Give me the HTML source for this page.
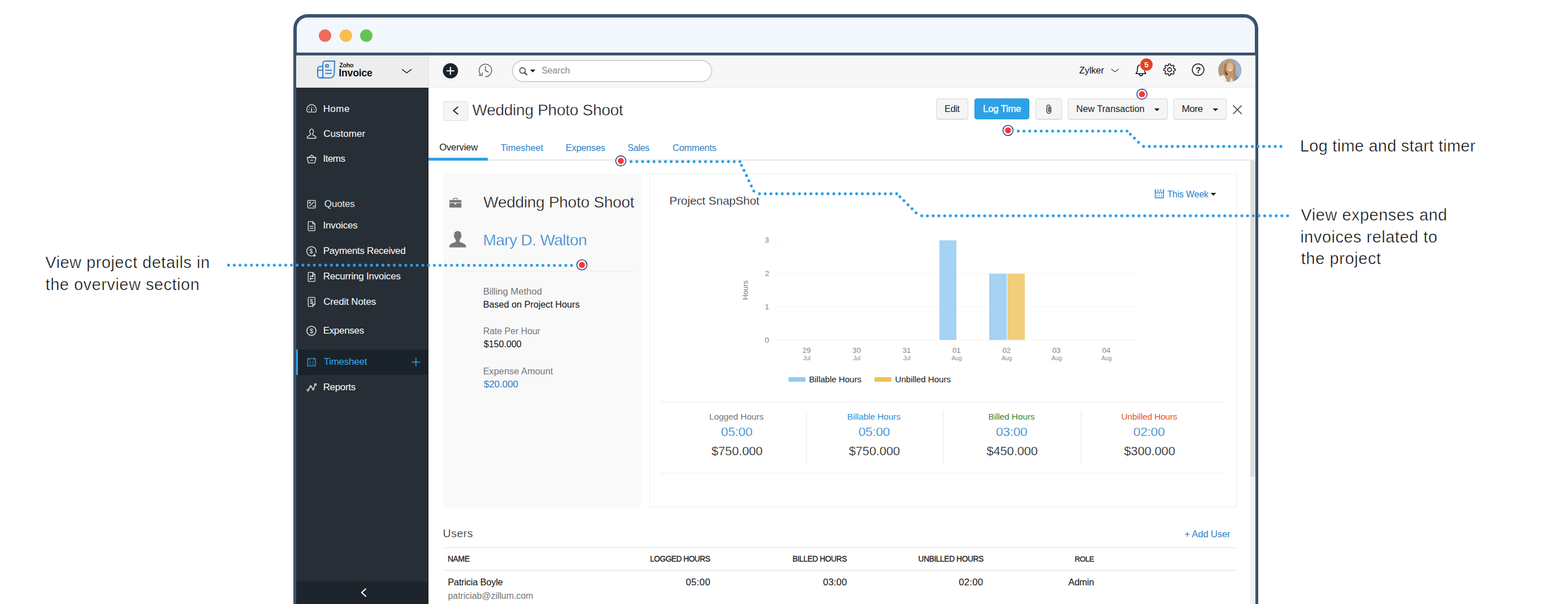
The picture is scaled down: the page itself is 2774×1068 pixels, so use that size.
<!DOCTYPE html>
<html lang="en"><head><meta charset="utf-8"><title>Zoho Invoice - Wedding Photo Shoot</title>
<style>
html,body{margin:0;padding:0;background:#fff;overflow:hidden;}
body{width:2774px;height:1068px;font-family:"Liberation Sans",sans-serif;}
#root{position:relative;width:2774px;height:1068px;overflow:hidden;background:#fff;}
.t{position:absolute;white-space:nowrap;display:block;margin:0;padding:0;font-weight:400;}
.b{position:absolute;box-sizing:border-box;}
svg{position:absolute;overflow:visible;}
</style></head>
<body>
<div id="root">
<section class="window">
<div class="b" style="left:519px;top:25px;width:1707.2px;height:1043px;border:6px solid #3d516b;border-bottom:0;border-radius:25px 25px 0 0;background:#f3f7fe;"></div>
<div class="b" style="left:525.00px;top:93.00px;width:1696.00px;height:5.00px;background:#3d516b;"></div>
<div class="b" style="left:564.00px;top:52.00px;width:22.00px;height:22.00px;background:#ee6a5f;border-radius:50%;"></div>
<div class="b" style="left:600.50px;top:52.00px;width:22.00px;height:22.00px;background:#f5bf4f;border-radius:50%;"></div>
<div class="b" style="left:637.00px;top:52.00px;width:22.00px;height:22.00px;background:#61c554;border-radius:50%;"></div>
<header>
<div class="b" style="left:524.00px;top:98.00px;width:1697.00px;height:57.00px;background:#f7f7f7;border-bottom:1px solid #ebebeb;"></div>
<div class="b" style="left:524.00px;top:98.00px;width:234.50px;height:56.50px;background:#ededed;border-right:1px solid #e2e2e2;"></div>
<span class="t" style="left:600.13px;top:109px;font-size:10.75px;line-height:13px;color:#1a1a1a;font-weight:700;letter-spacing:-0.277px;">Zoho</span>
<span class="t" style="left:599.30px;top:119px;font-size:17.75px;line-height:21px;color:#111;font-weight:700;letter-spacing:-0.246px;">Invoice</span>
<div class="b" style="left:906.00px;top:106.00px;width:353.50px;height:39.00px;background:#fff;box-shadow:inset 0 0 0 1.4px #c4c4c4;border-radius:20px;"></div>
<span class="t" style="left:958.18px;top:115px;font-size:16.00px;line-height:19px;color:#8a8a8a;letter-spacing:-0.116px;">Search</span>
<span class="t" style="left:1909.21px;top:114px;font-size:16.25px;line-height:20px;color:#111;letter-spacing:-0.034px;">Zylker</span>
</header>
<nav>
<div class="b" style="left:524.00px;top:154.50px;width:234.00px;height:913.50px;background:#272e36;border-right:1px solid #171b20;"></div>
<div class="b" style="left:524.00px;top:313.00px;width:201.00px;height:31.00px;background:#262f38;"></div>
<div class="b" style="left:524.00px;top:617.50px;width:233.00px;height:45.00px;background:#1b232a;"></div>
<div class="b" style="left:524.00px;top:617.50px;width:2.70px;height:45.00px;background:#2fa6f4;"></div>
<div class="b" style="left:524.00px;top:1028.00px;width:233.00px;height:40.00px;background:#1d242b;"></div>
<a class="t" style="left:571.64px;top:183px;font-size:17.00px;line-height:20px;color:#fff;letter-spacing:0.473px;">Home</a>
<a class="t" style="left:572.15px;top:227px;font-size:17.00px;line-height:20px;color:#fff;letter-spacing:0.056px;">Customer</a>
<a class="t" style="left:571.47px;top:271px;font-size:17.00px;line-height:20px;color:#fff;letter-spacing:-0.510px;">Items</a>
<a class="t" style="left:573.84px;top:351px;font-size:17.00px;line-height:20px;color:#e4e4e4;letter-spacing:-0.153px;">Quotes</a>
<a class="t" style="left:571.47px;top:389px;font-size:17.00px;line-height:20px;color:#fff;letter-spacing:-0.138px;">Invoices</a>
<a class="t" style="left:571.64px;top:434px;font-size:17.00px;line-height:20px;color:#fff;letter-spacing:-0.323px;">Payments Received</a>
<a class="t" style="left:571.64px;top:479px;font-size:17.00px;line-height:20px;color:#fff;letter-spacing:-0.206px;">Recurring Invoices</a>
<a class="t" style="left:572.15px;top:524px;font-size:17.00px;line-height:20px;color:#fff;letter-spacing:-0.125px;">Credit Notes</a>
<a class="t" style="left:571.64px;top:575px;font-size:17.00px;line-height:20px;color:#fff;letter-spacing:-0.296px;">Expenses</a>
<a class="t" style="left:572.66px;top:630px;font-size:17.00px;line-height:20px;color:#33a5f2;letter-spacing:-0.248px;">Timesheet</a>
<a class="t" style="left:571.64px;top:675px;font-size:17.00px;line-height:20px;color:#fff;letter-spacing:-0.324px;">Reports</a>
</nav>
<main>
<div class="b" style="left:758.00px;top:155.00px;width:1463.00px;height:913.00px;background:#fff;"></div>
<div class="b" style="left:783.50px;top:179.00px;width:44.50px;height:34.50px;background:#f5f5f5;border:1px solid #dcdcdc;border-radius:4px;"></div>
<h1 class="t" style="left:835.56px;top:178px;font-size:28.00px;line-height:34px;color:#111;letter-spacing:-0.267px;-webkit-text-stroke:0.5px #fff;">Wedding Photo Shoot</h1>
<div class="b" style="left:1655.50px;top:174.00px;width:57.20px;height:37.00px;background:#f5f5f5;border:1px solid #d8d8d8;border-radius:4px;box-shadow:0 1px 0.5px rgba(0,0,0,.10);"></div>
<div class="b" style="left:1724.00px;top:174.00px;width:97.30px;height:37.00px;background:#2ea1e6;border:1px solid #2694d8;border-radius:4px;"></div>
<div class="b" style="left:1832.20px;top:174.00px;width:46.50px;height:37.00px;background:#f5f5f5;border:1px solid #d8d8d8;border-radius:4px;box-shadow:0 1px 0.5px rgba(0,0,0,.10);"></div>
<div class="b" style="left:1889.00px;top:174.00px;width:177.30px;height:37.00px;background:#f5f5f5;border:1px solid #d8d8d8;border-radius:4px;box-shadow:0 1px 0.5px rgba(0,0,0,.10);"></div>
<div class="b" style="left:2076.20px;top:174.00px;width:93.80px;height:37.00px;background:#f5f5f5;border:1px solid #d8d8d8;border-radius:4px;box-shadow:0 1px 0.5px rgba(0,0,0,.10);"></div>
<span class="t" style="left:1670.95px;top:182px;font-size:16.25px;line-height:20px;color:#222;letter-spacing:-0.356px;">Edit</span>
<span class="t" style="left:1739.11px;top:183px;font-size:16.75px;line-height:20px;color:#fff;letter-spacing:-0.207px;-webkit-text-stroke:0.3px #fff;">Log Time</span>
<span class="t" style="left:1903.95px;top:182px;font-size:16.25px;line-height:20px;color:#222;letter-spacing:-0.009px;">New Transaction</span>
<span class="t" style="left:2090.64px;top:183px;font-size:17.00px;line-height:20px;color:#222;letter-spacing:-0.350px;">More</span>
<div class="b" style="left:758.00px;top:282.40px;width:1463.00px;height:1.50px;background:#e6e6e6;"></div>
<div class="b" style="left:758.00px;top:279.00px;width:105.30px;height:4.60px;background:#2b9fe6;"></div>
<span class="t" style="left:777.15px;top:251px;font-size:16.75px;line-height:20px;color:#1c1c1c;letter-spacing:-0.214px;">Overview</span>
<span class="t" style="left:885.72px;top:251px;font-size:16.25px;line-height:20px;color:#2c7fc7;letter-spacing:0.009px;">Timesheet</span>
<span class="t" style="left:1000.75px;top:251px;font-size:16.25px;line-height:20px;color:#2c7fc7;letter-spacing:-0.167px;">Expenses</span>
<span class="t" style="left:1110.28px;top:252px;font-size:16.00px;line-height:19px;color:#2c7fc7;letter-spacing:-0.305px;">Sales</span>
<span class="t" style="left:1189.78px;top:251px;font-size:16.50px;line-height:20px;color:#2c7fc7;letter-spacing:-0.282px;">Comments</span>
<div class="b" style="left:2212.00px;top:283.50px;width:9.00px;height:784.50px;background:#f1f1f1;"></div>
<div class="b" style="left:2212.00px;top:283.50px;width:9.00px;height:559.50px;background:#dedede;"></div>
<div class="b" style="left:784.00px;top:307.00px;width:350.00px;height:589.50px;background:#f9f9f9;"></div>
<h2 class="t" style="left:855.31px;top:341px;font-size:28.00px;line-height:34px;color:#111;letter-spacing:-0.272px;-webkit-text-stroke:0.5px #f9f9f9;">Wedding Photo Shoot</h2>
<span class="t" style="left:854.56px;top:408px;font-size:28.00px;line-height:34px;color:#2c7fc7;letter-spacing:-0.603px;-webkit-text-stroke:0.5px #f9f9f9;">Mary D. Walton</span>
<div class="b" style="left:795.00px;top:479.00px;width:327.40px;height:1.20px;background:#ececec;"></div>
<span class="t" style="left:854.66px;top:506px;font-size:16.75px;line-height:20px;color:#777;letter-spacing:-0.082px;">Billing Method</span>
<span class="t" style="left:854.70px;top:528px;font-size:16.25px;line-height:20px;color:#111;letter-spacing:-0.035px;">Based on Project Hours</span>
<span class="t" style="left:854.72px;top:576px;font-size:16.00px;line-height:19px;color:#777;letter-spacing:-0.093px;">Rate Per Hour</span>
<span class="t" style="left:855.84px;top:598px;font-size:16.25px;line-height:20px;color:#111;letter-spacing:-0.147px;">$150.000</span>
<span class="t" style="left:854.70px;top:646px;font-size:16.25px;line-height:20px;color:#777;letter-spacing:0.056px;">Expense Amount</span>
<span class="t" style="left:855.83px;top:669px;font-size:17.25px;line-height:21px;color:#2c7fc7;letter-spacing:-0.214px;">$20.000</span>
<div class="b" style="left:1149.00px;top:307.00px;width:1039.00px;height:589.50px;background:#fff;border:1px solid #ebebeb;"></div>
<span class="t" style="left:1184.36px;top:342px;font-size:20.50px;line-height:25px;color:#111;letter-spacing:-0.030px;-webkit-text-stroke:0.3px #fff;">Project SnapShot</span>
<span class="t" style="left:2064.88px;top:334px;font-size:15.75px;line-height:19px;color:#2c7fc7;letter-spacing:-0.136px;">This Week</span>
<div class="b" style="left:1371.60px;top:424.30px;width:640.50px;height:1.00px;background:#f7f7f7;"></div>
<div class="b" style="left:1371.60px;top:483.00px;width:640.50px;height:1.00px;background:#f7f7f7;"></div>
<div class="b" style="left:1371.60px;top:542.20px;width:640.50px;height:1.00px;background:#f7f7f7;"></div>
<div class="b" style="left:1371.60px;top:601.00px;width:640.50px;height:1.00px;background:#f3f3f3;"></div>
<div class="b" style="left:1371.60px;top:424.80px;width:1.00px;height:176.70px;background:#f8f8f8;"></div>
<div class="b" style="left:1661.80px;top:424.80px;width:30.70px;height:176.60px;background:#a6d2f3;"></div>
<div class="b" style="left:1750.30px;top:483.50px;width:30.50px;height:117.90px;background:#a6d2f3;"></div>
<div class="b" style="left:1782.00px;top:483.50px;width:30.70px;height:117.90px;background:#f0ce7a;"></div>
<span class="t" style="left:1353.05px;top:417px;font-size:13.50px;line-height:16px;color:#808080;">3</span>
<span class="t" style="left:1353.18px;top:476px;font-size:13.50px;line-height:16px;color:#808080;">2</span>
<span class="t" style="left:1353.12px;top:535px;font-size:13.50px;line-height:16px;color:#808080;">1</span>
<span class="t" style="left:1352.98px;top:594px;font-size:13.50px;line-height:16px;color:#808080;">0</span>
<span class="t" style="left:1419.61px;top:612px;font-size:13.25px;line-height:16px;color:#858585;">29</span>
<span class="t" style="left:1420.72px;top:628px;font-size:10.25px;line-height:12px;color:#8c8c8c;">Jul</span>
<span class="t" style="left:1508.11px;top:612px;font-size:13.25px;line-height:16px;color:#858585;">30</span>
<span class="t" style="left:1509.22px;top:628px;font-size:10.25px;line-height:12px;color:#8c8c8c;">Jul</span>
<span class="t" style="left:1596.68px;top:612px;font-size:13.25px;line-height:16px;color:#858585;">31</span>
<span class="t" style="left:1597.72px;top:628px;font-size:10.25px;line-height:12px;color:#8c8c8c;">Jul</span>
<span class="t" style="left:1684.98px;top:612px;font-size:13.25px;line-height:16px;color:#858585;">01</span>
<span class="t" style="left:1683.51px;top:628px;font-size:10.25px;line-height:12px;color:#8c8c8c;">Aug</span>
<span class="t" style="left:1773.41px;top:612px;font-size:13.25px;line-height:16px;color:#858585;">02</span>
<span class="t" style="left:1771.91px;top:628px;font-size:10.25px;line-height:12px;color:#8c8c8c;">Aug</span>
<span class="t" style="left:1861.65px;top:612px;font-size:13.25px;line-height:16px;color:#858585;">03</span>
<span class="t" style="left:1860.21px;top:628px;font-size:10.25px;line-height:12px;color:#8c8c8c;">Aug</span>
<span class="t" style="left:1949.88px;top:612px;font-size:13.25px;line-height:16px;color:#858585;">04</span>
<span class="t" style="left:1948.51px;top:628px;font-size:10.25px;line-height:12px;color:#8c8c8c;">Aug</span>
<span class="t" style="left:1319.4px;top:513px;font-size:13px;line-height:14px;color:#7a7a7a;transform:translate(-50%,-50%) rotate(-90deg);">Hours</span>
<div class="b" style="left:1395.30px;top:666.60px;width:29.50px;height:8.00px;background:#93c9f0;"></div>
<div class="b" style="left:1547.20px;top:666.60px;width:29.80px;height:8.00px;background:#efc354;"></div>
<span class="t" style="left:1431.23px;top:662px;font-size:15.25px;line-height:18px;color:#1a1a1a;letter-spacing:-0.095px;">Billable Hours</span>
<span class="t" style="left:1583.51px;top:662px;font-size:15.25px;line-height:18px;color:#1a1a1a;letter-spacing:-0.113px;">Unbilled Hours</span>
<div class="b" style="left:1167.50px;top:709.80px;width:1001.50px;height:1.20px;background:#ececec;"></div>
<div class="b" style="left:1167.50px;top:836.00px;width:1001.50px;height:1.20px;background:#ececec;"></div>
<div class="b" style="left:1425.50px;top:725.20px;width:1.20px;height:96.00px;background:#e6e6e6;"></div>
<div class="b" style="left:1668.20px;top:725.20px;width:1.20px;height:96.00px;background:#e6e6e6;"></div>
<div class="b" style="left:1912.30px;top:725.20px;width:1.20px;height:96.00px;background:#e6e6e6;"></div>
<span class="t" style="left:1254.71px;top:727px;font-size:15.50px;line-height:19px;color:#777;letter-spacing:-0.096px;">Logged Hours</span>
<span class="t" style="left:1275.54px;top:750px;font-size:22.75px;line-height:27px;color:#2c7fc7;letter-spacing:-0.292px;-webkit-text-stroke:0.3px #fff;">05:00</span>
<span class="t" style="left:1258.73px;top:785px;font-size:21.75px;line-height:26px;color:#151515;letter-spacing:-0.031px;-webkit-text-stroke:0.3px #fff;">$750.000</span>
<span class="t" style="left:1498.86px;top:727px;font-size:15.50px;line-height:19px;color:#2b8fdb;letter-spacing:-0.096px;">Billable Hours</span>
<span class="t" style="left:1518.69px;top:750px;font-size:22.75px;line-height:27px;color:#2c7fc7;letter-spacing:-0.292px;-webkit-text-stroke:0.3px #fff;">05:00</span>
<span class="t" style="left:1501.73px;top:785px;font-size:21.75px;line-height:26px;color:#151515;letter-spacing:-0.031px;-webkit-text-stroke:0.3px #fff;">$750.000</span>
<span class="t" style="left:1748.41px;top:727px;font-size:15.50px;line-height:19px;color:#2e8b37;letter-spacing:-0.115px;">Billed Hours</span>
<span class="t" style="left:1761.99px;top:750px;font-size:22.75px;line-height:27px;color:#2c7fc7;letter-spacing:-0.292px;-webkit-text-stroke:0.3px #fff;">03:00</span>
<span class="t" style="left:1745.43px;top:785px;font-size:21.75px;line-height:26px;color:#151515;letter-spacing:-0.031px;-webkit-text-stroke:0.3px #fff;">$450.000</span>
<span class="t" style="left:1983.59px;top:727px;font-size:15.50px;line-height:19px;color:#e8541a;letter-spacing:-0.190px;">Unbilled Hours</span>
<span class="t" style="left:2005.09px;top:750px;font-size:22.75px;line-height:27px;color:#2c7fc7;letter-spacing:-0.292px;-webkit-text-stroke:0.3px #fff;">02:00</span>
<span class="t" style="left:1988.53px;top:785px;font-size:21.75px;line-height:26px;color:#151515;letter-spacing:-0.031px;-webkit-text-stroke:0.3px #fff;">$300.000</span>
<span class="t" style="left:783.59px;top:932px;font-size:19.50px;line-height:23px;color:#1a1a1a;letter-spacing:0.488px;-webkit-text-stroke:0.3px #fff;">Users</span>
<span class="t" style="left:2095.43px;top:934px;font-size:16.50px;line-height:20px;color:#2c7fc7;letter-spacing:-0.104px;">+ Add User</span>
<div class="b" style="left:783.50px;top:967.80px;width:1404.50px;height:1.20px;background:#dcdcdc;"></div>
<div class="b" style="left:783.50px;top:1007.80px;width:1404.50px;height:1.20px;background:#dcdcdc;"></div>
<span class="t" style="left:791.90px;top:981px;font-size:13.75px;line-height:16px;color:#1c2127;letter-spacing:-0.240px;-webkit-text-stroke:0.35px #1c2127;">NAME</span>
<span class="t" style="left:1149.95px;top:981px;font-size:13.75px;line-height:16px;color:#1c2127;letter-spacing:-0.514px;-webkit-text-stroke:0.35px #1c2127;">LOGGED HOURS</span>
<span class="t" style="left:1401.90px;top:981px;font-size:13.75px;line-height:16px;color:#1c2127;letter-spacing:-0.403px;-webkit-text-stroke:0.35px #1c2127;">BILLED HOURS</span>
<span class="t" style="left:1624.62px;top:981px;font-size:13.75px;line-height:16px;color:#1c2127;letter-spacing:-0.398px;-webkit-text-stroke:0.35px #1c2127;">UNBILLED HOURS</span>
<span class="t" style="left:1901.19px;top:981px;font-size:13.25px;line-height:16px;color:#1c2127;letter-spacing:-0.517px;-webkit-text-stroke:0.35px #1c2127;">ROLE</span>
<span class="t" style="left:792.28px;top:1019px;font-size:16.50px;line-height:20px;color:#111;letter-spacing:-0.264px;">Patricia Boyle</span>
<span class="t" style="left:792.56px;top:1044px;font-size:16.00px;line-height:19px;color:#777;letter-spacing:-0.076px;">patriciab@zillum.com</span>
<span class="t" style="left:1213.13px;top:1020px;font-size:16.75px;line-height:20px;color:#111;letter-spacing:0.370px;">05:00</span>
<span class="t" style="left:1455.98px;top:1020px;font-size:16.75px;line-height:20px;color:#111;letter-spacing:0.120px;">03:00</span>
<span class="t" style="left:1696.33px;top:1020px;font-size:16.75px;line-height:20px;color:#111;letter-spacing:0.195px;">02:00</span>
<span class="t" style="left:1889.90px;top:1019px;font-size:16.50px;line-height:20px;color:#111;letter-spacing:-0.251px;">Admin</span>
</main>
</section>
<aside>
<span class="t" style="left:80.21px;top:447px;font-size:28.75px;line-height:34px;color:#0a0a0a;letter-spacing:0.603px;-webkit-text-stroke:0.5px #fff;">View project details in</span>
<span class="t" style="left:80.62px;top:486px;font-size:28.75px;line-height:34px;color:#0a0a0a;letter-spacing:0.607px;-webkit-text-stroke:0.5px #fff;">the overview section</span>
<span class="t" style="left:2299.95px;top:241px;font-size:28.75px;line-height:34px;color:#0a0a0a;letter-spacing:0.363px;-webkit-text-stroke:0.5px #fff;">Log time and start timer</span>
<span class="t" style="left:2301.61px;top:363px;font-size:28.75px;line-height:34px;color:#0a0a0a;letter-spacing:0.605px;-webkit-text-stroke:0.5px #fff;">View expenses and</span>
<span class="t" style="left:2300.38px;top:402px;font-size:28.75px;line-height:34px;color:#0a0a0a;letter-spacing:0.589px;-webkit-text-stroke:0.5px #fff;">invoices related to</span>
<span class="t" style="left:2301.82px;top:440px;font-size:28.75px;line-height:34px;color:#0a0a0a;letter-spacing:0.696px;-webkit-text-stroke:0.5px #fff;">the project</span>
</aside>
<svg width="2774" height="1068" viewBox="0 0 2774 1068" style="left:0;top:0;"><g fill="#2b9fe6"><circle cx="404.4" cy="468.7" r="2.55"/><circle cx="414.5" cy="468.7" r="2.55"/><circle cx="424.6" cy="468.7" r="2.55"/><circle cx="434.7" cy="468.7" r="2.55"/><circle cx="444.8" cy="468.7" r="2.55"/><circle cx="455.0" cy="468.7" r="2.55"/><circle cx="465.1" cy="468.8" r="2.55"/><circle cx="475.2" cy="468.8" r="2.55"/><circle cx="485.3" cy="468.8" r="2.55"/><circle cx="495.4" cy="468.8" r="2.55"/><circle cx="505.5" cy="468.8" r="2.55"/><circle cx="515.6" cy="468.8" r="2.55"/><circle cx="525.7" cy="468.8" r="2.55"/><circle cx="535.9" cy="468.8" r="2.55"/><circle cx="546.0" cy="468.8" r="2.55"/><circle cx="556.1" cy="468.8" r="2.55"/><circle cx="566.2" cy="468.8" r="2.55"/><circle cx="576.3" cy="468.8" r="2.55"/><circle cx="586.4" cy="468.8" r="2.55"/><circle cx="596.5" cy="468.9" r="2.55"/><circle cx="606.6" cy="468.9" r="2.55"/><circle cx="616.7" cy="468.9" r="2.55"/><circle cx="626.9" cy="468.9" r="2.55"/><circle cx="637.0" cy="468.9" r="2.55"/><circle cx="647.1" cy="468.9" r="2.55"/><circle cx="657.2" cy="468.9" r="2.55"/><circle cx="667.3" cy="468.9" r="2.55"/><circle cx="677.4" cy="468.9" r="2.55"/><circle cx="687.5" cy="468.9" r="2.55"/><circle cx="697.6" cy="468.9" r="2.55"/><circle cx="707.8" cy="468.9" r="2.55"/><circle cx="717.9" cy="469.0" r="2.55"/><circle cx="728.0" cy="469.0" r="2.55"/><circle cx="738.1" cy="469.0" r="2.55"/><circle cx="748.2" cy="469.0" r="2.55"/><circle cx="758.3" cy="469.0" r="2.55"/><circle cx="768.4" cy="469.0" r="2.55"/><circle cx="778.5" cy="469.0" r="2.55"/><circle cx="788.6" cy="469.0" r="2.55"/><circle cx="798.8" cy="469.0" r="2.55"/><circle cx="808.9" cy="469.0" r="2.55"/><circle cx="819.0" cy="469.0" r="2.55"/><circle cx="829.1" cy="469.1" r="2.55"/><circle cx="839.2" cy="469.1" r="2.55"/><circle cx="849.3" cy="469.1" r="2.55"/><circle cx="859.4" cy="469.1" r="2.55"/><circle cx="869.5" cy="469.1" r="2.55"/><circle cx="879.6" cy="469.1" r="2.55"/><circle cx="889.8" cy="469.1" r="2.55"/><circle cx="899.9" cy="469.1" r="2.55"/><circle cx="910.0" cy="469.1" r="2.55"/><circle cx="920.1" cy="469.1" r="2.55"/><circle cx="930.2" cy="469.1" r="2.55"/><circle cx="940.3" cy="469.1" r="2.55"/><circle cx="950.4" cy="469.1" r="2.55"/><circle cx="960.5" cy="469.2" r="2.55"/><circle cx="970.7" cy="469.2" r="2.55"/><circle cx="980.8" cy="469.2" r="2.55"/><circle cx="990.9" cy="469.2" r="2.55"/><circle cx="1001.0" cy="469.2" r="2.55"/><circle cx="1011.1" cy="469.2" r="2.55"/><circle cx="1801.5" cy="231.7" r="2.55"/><circle cx="1811.6" cy="231.7" r="2.55"/><circle cx="1821.8" cy="231.7" r="2.55"/><circle cx="1831.9" cy="231.7" r="2.55"/><circle cx="1842.0" cy="231.7" r="2.55"/><circle cx="1852.2" cy="231.7" r="2.55"/><circle cx="1862.3" cy="231.7" r="2.55"/><circle cx="1872.4" cy="231.7" r="2.55"/><circle cx="1882.6" cy="231.7" r="2.55"/><circle cx="1892.7" cy="231.7" r="2.55"/><circle cx="1902.8" cy="231.7" r="2.55"/><circle cx="1912.9" cy="231.7" r="2.55"/><circle cx="1923.1" cy="231.7" r="2.55"/><circle cx="1933.2" cy="231.7" r="2.55"/><circle cx="1943.3" cy="231.7" r="2.55"/><circle cx="1953.5" cy="231.7" r="2.55"/><circle cx="1963.6" cy="231.7" r="2.55"/><circle cx="1973.7" cy="231.7" r="2.55"/><circle cx="1983.9" cy="231.7" r="2.55"/><circle cx="1994.0" cy="231.7" r="2.55"/><circle cx="1999.7" cy="237.2" r="2.55"/><circle cx="2006.9" cy="244.3" r="2.55"/><circle cx="2014.1" cy="251.5" r="2.55"/><circle cx="2023.2" cy="258.9" r="2.55"/><circle cx="2033.3" cy="258.9" r="2.55"/><circle cx="2043.4" cy="258.9" r="2.55"/><circle cx="2053.6" cy="258.9" r="2.55"/><circle cx="2063.7" cy="258.9" r="2.55"/><circle cx="2073.8" cy="258.9" r="2.55"/><circle cx="2083.9" cy="258.9" r="2.55"/><circle cx="2094.0" cy="258.9" r="2.55"/><circle cx="2104.2" cy="258.9" r="2.55"/><circle cx="2114.3" cy="258.9" r="2.55"/><circle cx="2124.4" cy="258.9" r="2.55"/><circle cx="2134.5" cy="258.9" r="2.55"/><circle cx="2144.7" cy="258.9" r="2.55"/><circle cx="2154.8" cy="258.9" r="2.55"/><circle cx="2164.9" cy="258.9" r="2.55"/><circle cx="2175.0" cy="258.9" r="2.55"/><circle cx="2185.1" cy="258.9" r="2.55"/><circle cx="2195.3" cy="258.9" r="2.55"/><circle cx="2205.4" cy="258.9" r="2.55"/><circle cx="2215.5" cy="258.9" r="2.55"/><circle cx="2225.6" cy="258.9" r="2.55"/><circle cx="2235.7" cy="258.9" r="2.55"/><circle cx="2245.9" cy="258.9" r="2.55"/><circle cx="2256.0" cy="258.9" r="2.55"/><circle cx="2266.1" cy="258.9" r="2.55"/><circle cx="1116.5" cy="285.7" r="2.55"/><circle cx="1126.6" cy="285.7" r="2.55"/><circle cx="1136.8" cy="285.7" r="2.55"/><circle cx="1146.9" cy="285.7" r="2.55"/><circle cx="1157.0" cy="285.7" r="2.55"/><circle cx="1167.2" cy="285.7" r="2.55"/><circle cx="1177.3" cy="285.7" r="2.55"/><circle cx="1187.4" cy="285.7" r="2.55"/><circle cx="1197.6" cy="285.7" r="2.55"/><circle cx="1207.7" cy="285.7" r="2.55"/><circle cx="1217.8" cy="285.7" r="2.55"/><circle cx="1227.9" cy="285.7" r="2.55"/><circle cx="1238.1" cy="285.7" r="2.55"/><circle cx="1248.2" cy="285.7" r="2.55"/><circle cx="1258.3" cy="285.7" r="2.55"/><circle cx="1268.5" cy="285.7" r="2.55"/><circle cx="1278.6" cy="285.7" r="2.55"/><circle cx="1288.7" cy="285.7" r="2.55"/><circle cx="1298.9" cy="285.7" r="2.55"/><circle cx="1309.0" cy="285.7" r="2.55"/><circle cx="1311.9" cy="292.2" r="2.55"/><circle cx="1316.2" cy="301.3" r="2.55"/><circle cx="1320.6" cy="310.4" r="2.55"/><circle cx="1324.9" cy="319.6" r="2.55"/><circle cx="1329.3" cy="328.7" r="2.55"/><circle cx="1333.6" cy="337.8" r="2.55"/><circle cx="1343.6" cy="342.6" r="2.55"/><circle cx="1353.7" cy="342.6" r="2.55"/><circle cx="1363.8" cy="342.6" r="2.55"/><circle cx="1373.9" cy="342.6" r="2.55"/><circle cx="1384.0" cy="342.6" r="2.55"/><circle cx="1394.2" cy="342.6" r="2.55"/><circle cx="1404.3" cy="342.6" r="2.55"/><circle cx="1414.4" cy="342.6" r="2.55"/><circle cx="1424.5" cy="342.6" r="2.55"/><circle cx="1434.6" cy="342.6" r="2.55"/><circle cx="1444.7" cy="342.6" r="2.55"/><circle cx="1454.8" cy="342.6" r="2.55"/><circle cx="1464.9" cy="342.6" r="2.55"/><circle cx="1475.1" cy="342.6" r="2.55"/><circle cx="1485.2" cy="342.6" r="2.55"/><circle cx="1495.3" cy="342.6" r="2.55"/><circle cx="1505.4" cy="342.6" r="2.55"/><circle cx="1515.5" cy="342.6" r="2.55"/><circle cx="1525.6" cy="342.6" r="2.55"/><circle cx="1535.7" cy="342.6" r="2.55"/><circle cx="1545.8" cy="342.6" r="2.55"/><circle cx="1556.0" cy="342.6" r="2.55"/><circle cx="1566.1" cy="342.6" r="2.55"/><circle cx="1576.2" cy="342.6" r="2.55"/><circle cx="1586.3" cy="342.6" r="2.55"/><circle cx="1592.1" cy="347.7" r="2.55"/><circle cx="1599.2" cy="354.8" r="2.55"/><circle cx="1606.4" cy="362.0" r="2.55"/><circle cx="1613.5" cy="369.1" r="2.55"/><circle cx="1620.7" cy="376.3" r="2.55"/><circle cx="1630.7" cy="381.6" r="2.55"/><circle cx="1640.8" cy="381.6" r="2.55"/><circle cx="1650.9" cy="381.6" r="2.55"/><circle cx="1661.0" cy="381.6" r="2.55"/><circle cx="1671.2" cy="381.6" r="2.55"/><circle cx="1681.3" cy="381.6" r="2.55"/><circle cx="1691.4" cy="381.6" r="2.55"/><circle cx="1701.5" cy="381.6" r="2.55"/><circle cx="1711.6" cy="381.6" r="2.55"/><circle cx="1721.7" cy="381.6" r="2.55"/><circle cx="1731.8" cy="381.6" r="2.55"/><circle cx="1741.9" cy="381.6" r="2.55"/><circle cx="1752.0" cy="381.6" r="2.55"/><circle cx="1762.2" cy="381.6" r="2.55"/><circle cx="1772.3" cy="381.6" r="2.55"/><circle cx="1782.4" cy="381.6" r="2.55"/><circle cx="1792.5" cy="381.6" r="2.55"/><circle cx="1802.6" cy="381.6" r="2.55"/><circle cx="1812.7" cy="381.6" r="2.55"/><circle cx="1822.8" cy="381.6" r="2.55"/><circle cx="1833.0" cy="381.6" r="2.55"/><circle cx="1843.1" cy="381.6" r="2.55"/><circle cx="1853.2" cy="381.6" r="2.55"/><circle cx="1863.3" cy="381.6" r="2.55"/><circle cx="1873.4" cy="381.6" r="2.55"/><circle cx="1883.5" cy="381.6" r="2.55"/><circle cx="1893.6" cy="381.6" r="2.55"/><circle cx="1903.7" cy="381.6" r="2.55"/><circle cx="1913.9" cy="381.6" r="2.55"/><circle cx="1924.0" cy="381.6" r="2.55"/><circle cx="1934.1" cy="381.6" r="2.55"/><circle cx="1944.2" cy="381.6" r="2.55"/><circle cx="1954.3" cy="381.6" r="2.55"/><circle cx="1964.4" cy="381.6" r="2.55"/><circle cx="1974.5" cy="381.6" r="2.55"/><circle cx="1984.6" cy="381.6" r="2.55"/><circle cx="1994.8" cy="381.6" r="2.55"/><circle cx="2004.9" cy="381.6" r="2.55"/><circle cx="2015.0" cy="381.6" r="2.55"/><circle cx="2025.1" cy="381.6" r="2.55"/><circle cx="2035.2" cy="381.6" r="2.55"/><circle cx="2045.3" cy="381.6" r="2.55"/><circle cx="2055.4" cy="381.6" r="2.55"/><circle cx="2065.5" cy="381.6" r="2.55"/><circle cx="2075.7" cy="381.6" r="2.55"/><circle cx="2085.8" cy="381.6" r="2.55"/><circle cx="2095.9" cy="381.6" r="2.55"/><circle cx="2106.0" cy="381.6" r="2.55"/><circle cx="2116.1" cy="381.6" r="2.55"/><circle cx="2126.2" cy="381.6" r="2.55"/><circle cx="2136.3" cy="381.6" r="2.55"/><circle cx="2146.4" cy="381.6" r="2.55"/><circle cx="2156.6" cy="381.6" r="2.55"/><circle cx="2166.7" cy="381.6" r="2.55"/><circle cx="2176.8" cy="381.6" r="2.55"/><circle cx="2186.9" cy="381.6" r="2.55"/><circle cx="2197.0" cy="381.6" r="2.55"/><circle cx="2207.1" cy="381.6" r="2.55"/><circle cx="2217.2" cy="381.6" r="2.55"/><circle cx="2227.3" cy="381.6" r="2.55"/><circle cx="2237.4" cy="381.6" r="2.55"/><circle cx="2247.6" cy="381.6" r="2.55"/><circle cx="2257.7" cy="381.6" r="2.55"/><circle cx="2267.8" cy="381.6" r="2.55"/><circle cx="2277.9" cy="381.6" r="2.55"/></g><circle cx="1098.3" cy="284.5" r="9" fill="#fff" stroke="#141d72" stroke-width="1.35"/><circle cx="1098.3" cy="284.5" r="5.3" fill="#fb3437"/><circle cx="2020.3" cy="166.5" r="9" fill="#fff" stroke="#141d72" stroke-width="1.35"/><circle cx="2020.3" cy="166.5" r="5.3" fill="#fb3437"/><circle cx="1783.3" cy="230.6" r="9" fill="#fff" stroke="#141d72" stroke-width="1.35"/><circle cx="1783.3" cy="230.6" r="5.3" fill="#fb3437"/><circle cx="1029.5" cy="468.4" r="9" fill="#fff" stroke="#141d72" stroke-width="1.35"/><circle cx="1029.5" cy="468.4" r="5.3" fill="#fb3437"/><g fill="none" stroke="#2f7fcc" stroke-width="2.0" stroke-linecap="round" stroke-linejoin="round" ><path d="M571.2 137.8 V112.3 a4.3 4.3 0 0 1 4.3 -4.3 H592 L591.3 130.5 a7.6 7.6 0 0 1 -7.6 7.3 H566.5"/><path d="M571.2 117.6 H566.6 a4.6 4.6 0 0 0 -4.6 4.6 V133.3 a4.6 4.6 0 0 0 9.2 0"/><path d="M562 124.2 H571"/><rect x="576.2" y="114.4" width="4.6" height="4.2"/><path d="M576.2 124.3 H586.3 M576.2 129.8 H586.3"/></g><g fill="none" stroke="#222" stroke-width="1.5" stroke-linecap="round" stroke-linejoin="round" ><path d="M711.6 122.8 L719.6 128.9 L727.6 122.8"/></g><circle cx="796.9" cy="125.2" r="13.4" fill="#19232b"/><path d="M789.9 125.3h14M796.9 118.3v14" stroke="#fff" stroke-width="2" fill="none"/><g fill="none" stroke="#555" stroke-width="1.4" stroke-linecap="round" stroke-linejoin="round" ><path d="M850 131.4 A11.1 11.1 0 1 1 858.9 135.6"/><path d="M853.3 128.6 L852.8 133.5 L847.6 133"/><path d="M858.9 117.6 V125 L863.8 127.4"/></g><g fill="none" stroke="#4a4a4a" stroke-width="1.6" stroke-linecap="round" stroke-linejoin="round" ><circle cx="924.4" cy="124.6" r="5"/><path d="M928.2 128.4 L932 132.2" stroke-width="2.2"/></g><path d="M938.1 123.1 h8.9 l-4.45 4.8z" fill="#111"/><g fill="none" stroke="#444" stroke-width="1.2" stroke-linecap="round" stroke-linejoin="round" ><path d="M1966.3 122.2 L1972.5 127 L1978.7 122.2"/></g><g fill="none" stroke="#111" stroke-width="1.6" stroke-linecap="round" stroke-linejoin="round" ><path d="M2009.6 130.3 H2027.2 L2025.4 127.3 c-.7-1.2-.9-2.400-.9-4.500 V120.5 a6.100 6.100 0 0 0 -12.200 0 v2.300 c0 2.100 -.2 3.300 -.9 4.500z"/><path d="M2015.3 130.8 a3.100 3.100 0 0 0 6.200 0"/></g><circle cx="2028.2" cy="114.2" r="11.9" fill="#f9f9f9"/><circle cx="2028.2" cy="114.2" r="11" fill="#e3421d"/><text x="2028.3" y="119.1" font-family="Liberation Sans, sans-serif" font-size="13.5" font-weight="700" fill="#fff" stroke="none" text-anchor="middle">5</text><g fill="none" stroke="#111" stroke-width="1.5" stroke-linecap="round" stroke-linejoin="round" ><path d="M2079.25 123.25 L2079.24 123.65 L2079.21 124.05 L2079.14 124.44 L2078.88 124.81 L2077.88 125.01 L2076.87 125.13 L2076.59 125.38 L2076.48 125.66 L2076.37 125.95 L2076.26 126.24 L2076.14 126.52 L2076.01 126.79 L2075.89 127.08 L2075.91 127.45 L2076.53 128.25 L2077.10 129.10 L2077.03 129.54 L2076.80 129.87 L2076.54 130.17 L2076.26 130.46 L2075.97 130.74 L2075.67 131.00 L2075.34 131.23 L2074.90 131.30 L2074.05 130.73 L2073.25 130.11 L2072.88 130.09 L2072.59 130.21 L2072.32 130.34 L2072.04 130.46 L2071.75 130.57 L2071.46 130.68 L2071.18 130.79 L2070.93 131.07 L2070.81 132.08 L2070.61 133.08 L2070.24 133.34 L2069.85 133.41 L2069.45 133.44 L2069.05 133.45 L2068.65 133.44 L2068.25 133.41 L2067.86 133.34 L2067.49 133.08 L2067.29 132.08 L2067.17 131.07 L2066.92 130.79 L2066.64 130.68 L2066.35 130.57 L2066.06 130.46 L2065.78 130.34 L2065.51 130.21 L2065.22 130.09 L2064.85 130.11 L2064.05 130.73 L2063.20 131.30 L2062.76 131.23 L2062.43 131.00 L2062.13 130.74 L2061.84 130.46 L2061.56 130.17 L2061.30 129.87 L2061.07 129.54 L2061.00 129.10 L2061.57 128.25 L2062.19 127.45 L2062.21 127.08 L2062.09 126.79 L2061.96 126.52 L2061.84 126.24 L2061.73 125.95 L2061.62 125.66 L2061.51 125.38 L2061.23 125.13 L2060.22 125.01 L2059.22 124.81 L2058.96 124.44 L2058.89 124.05 L2058.86 123.65 L2058.85 123.25 L2058.86 122.85 L2058.89 122.45 L2058.96 122.06 L2059.22 121.69 L2060.22 121.49 L2061.23 121.37 L2061.51 121.12 L2061.62 120.84 L2061.73 120.55 L2061.84 120.26 L2061.96 119.98 L2062.09 119.71 L2062.21 119.42 L2062.19 119.05 L2061.57 118.25 L2061.00 117.40 L2061.07 116.96 L2061.30 116.63 L2061.56 116.33 L2061.84 116.04 L2062.13 115.76 L2062.43 115.50 L2062.76 115.27 L2063.20 115.20 L2064.05 115.77 L2064.85 116.39 L2065.22 116.41 L2065.51 116.29 L2065.78 116.16 L2066.06 116.04 L2066.35 115.93 L2066.64 115.82 L2066.92 115.71 L2067.17 115.43 L2067.29 114.42 L2067.49 113.42 L2067.86 113.16 L2068.25 113.09 L2068.65 113.06 L2069.05 113.05 L2069.45 113.06 L2069.85 113.09 L2070.24 113.16 L2070.61 113.42 L2070.81 114.42 L2070.93 115.43 L2071.18 115.71 L2071.46 115.82 L2071.75 115.93 L2072.04 116.04 L2072.32 116.16 L2072.59 116.29 L2072.88 116.41 L2073.25 116.39 L2074.05 115.77 L2074.90 115.20 L2075.34 115.27 L2075.67 115.50 L2075.97 115.76 L2076.26 116.04 L2076.54 116.33 L2076.80 116.63 L2077.03 116.96 L2077.10 117.40 L2076.53 118.25 L2075.91 119.05 L2075.89 119.42 L2076.01 119.71 L2076.14 119.98 L2076.26 120.26 L2076.37 120.55 L2076.48 120.84 L2076.59 121.12 L2076.87 121.37 L2077.88 121.49 L2078.88 121.69 L2079.14 122.06 L2079.21 122.45 L2079.24 122.85Z"/><circle cx="2069.05" cy="123.25" r="3.5"/></g><g fill="none" stroke="#111" stroke-width="1.5" stroke-linecap="round" stroke-linejoin="round" ><circle cx="2119.6" cy="123.3" r="10.3"/></g><text x="2119.7" y="128.7" font-family="Liberation Sans, sans-serif" font-size="14.5" font-weight="400" fill="#111" stroke="#111" stroke-width="0.5" text-anchor="middle">?</text><circle cx="2175.8" cy="124.2" r="21.4" fill="#fff"/><defs><clipPath id="av"><circle cx="2175.8" cy="124.2" r="20.6"/></clipPath></defs><g clip-path="url(#av)"><rect x="2154" y="102" width="44" height="45" fill="#94b2da"/><path d="M2154 102 h11 l-1 14 l2 18 l-12 4z" fill="#b29a84"/><path d="M2186 112 l8 10 l3 14 l-7 -6z" fill="#aeb4bf"/><path d="M2172 105.500 c7 -1.500 12 3 13.500 10 c1.500 7 .5 13 1.500 19 c1 5 2.500 8 1 12 h-23 c-1.500 -5 -2.500 -10 -2 -16 c.5 -7 0 -12 2 -17 c1.500 -4 3.500 -7 7 -8z" fill="#c39a6e"/><path d="M2166.500 112 c-2 6 -1.500 13 -1 20 c.5 5 1.500 9 3.500 13 h3 c-2.500 -6 -3.500 -12 -3.500 -18 c0 -6 .5 -11 2 -15z" fill="#a97b4d"/><path d="M2184 113 c1.500 6 1 12 1.500 18 c.5 4 1.500 7 1 11 l-2.500 1 c-1 -6 -2 -11 -2 -17 c0 -5 .5 -9 2 -13z" fill="#b08456"/><ellipse cx="2176" cy="119.200" rx="5.600" ry="8" fill="#e4b795"/><path d="M2170.800 114 c1 -4 4 -6 7 -5.500 c2 .3 3.500 1.500 4.500 4 c-2 -1.500 -4.500 -2 -7 -1 c-2 .8 -3.500 1.500 -4.500 2.500z" fill="#c9a074"/><ellipse cx="2176.500" cy="123.700" rx="2.800" ry="1" fill="#f3ece6"/><path d="M2173 125.500 q3.500 2.800 7 0 q-1 3.500 -3.500 3.500 q-2.500 0 -3.500 -3.500z" fill="#c58f72"/><path d="M2168 124 c1 3 2 5 4 6.500 l-1 3 c-2 -1.500 -3.500 -4 -3 -9.500z" fill="#4a3426"/><path d="M2154 147 v-9 c3 -3 7 -5 12 -5.500 c1.500 3 3 6 4 9 l1 5.500z" fill="#f5efeb"/><path d="M2175 147 l3 -10 c2 2 3 5 3.500 10z" fill="#eadfd8"/><path d="M2186 134 c3 0 5 2 6 5 l-3 5 l-3 -4z" fill="#7d93c9"/></g><g fill="none" stroke="#222" stroke-width="2.0" stroke-linecap="round" stroke-linejoin="round" ><path d="M809.9 189.3 L802.3 195.5 L809.9 201.7"/></g><g fill="none" stroke="#444" stroke-width="1.5" stroke-linecap="round" stroke-linejoin="round" ><path d="M1859.2 189.2 V196.8 a3.6 3.6 0 0 1 -7.2 0 V188.4 a2.6 2.6 0 0 1 5.2 0 V196.2 a1.1 1.1 0 0 1 -2.2 0 V189.6"/></g><path d="M2042 191.8 h9.4 l-4.7 4.8z" fill="#111"/><path d="M2145.6 191.8 h9.4 l-4.7 4.8z" fill="#111"/><path d="M2141.9 341 h9.5 l-4.75 5z" fill="#111"/><path d="M2181.6 186.4 L2196.8 201.6 M2196.8 186.4 L2181.6 201.6" fill="none" stroke="#505050" stroke-width="1.7"/><g fill="#787878"><path d="M795.1 353.7 h21.2 v4.2 h-21.2z M795.1 359 h9 v2.2 h3.2 v-2.2 h9 v7.9 h-21.2z"/><path d="M801.6 353.7 v-2.3 a1.4 1.4 0 0 1 1.4 -1.4 h5.4 a1.4 1.4 0 0 1 1.4 1.4 v2.3 h-1.3 v-1.9 a.5 .5 0 0 0 -.5 -.5 h-4.6 a.5 .5 0 0 0 -.5 .5 v1.9z"/></g><path d="M809.7 408.6 c3.7 0 6.3 2.5 6.3 6.2 v1.2 c.7 .2 .9 1 .6 2 c-.2 .8 -.6 1.3 -1.1 1.4 c-.4 2 -1.300 3.500 -2.400 4.500 v2.600 c.1 1 1 1.700 2.500 2.300 c4 1.500 8.200 2.600 8.900 6.500 v2.300 h-29.600 v-2.300 c.7-3.900 4.900-5 8.900-6.500 c1.500-.6 2.400-1.300 2.500-2.300 v-2.600 c-1.100-1-2-2.500-2.400-4.500 c-.5-.1-.9-.6-1.100-1.400 c-.3-1-.1-1.800 .6-2 v-1.200 c0-3.700 2.600-6.200 6.300-6.200z" fill="#787878"/><g fill="none" stroke="#2c7fc7" stroke-width="1.4" stroke-linecap="round" stroke-linejoin="round" ><path d="M2043.8 337.2 V349.7 H2058.4 V337.2"/><path d="M2043.8 339.9 H2058.4"/><path d="M2043.8 335.3 v3 M2058.4 335.3 v3 M2048.6 335.3 v2.2 M2053.6 335.3 v2.2" stroke-width="1.6"/></g><g fill="#2c7fc7"><circle cx="2047" cy="342.3" r="1.05"/><circle cx="2051.1" cy="342.3" r="1.05"/><circle cx="2055.2" cy="342.3" r="1.05"/><circle cx="2047" cy="346.5" r="1.05"/><circle cx="2051.1" cy="346.5" r="1.05"/><circle cx="2055.2" cy="346.5" r="1.05"/></g><g fill="none" stroke="#ececec" stroke-width="1.3" stroke-linecap="round" stroke-linejoin="round" ><path d="M545.3 198.2 h11.8 a2 2 0 0 0 1.900 -1.400 c.4 -1.100 .6 -2.200 .6 -3.400 a8.400 8.400 0 0 0 -16.800 0 c0 1.200 .2 2.300 .6 3.400 a2 2 0 0 0 1.900 1.400z"/><path d="M551.2 196.2 v-4.200" stroke-width="1.6"/></g><g fill="#ececec"><circle cx="546.2" cy="193.6" r=".8"/><circle cx="547.7" cy="190.2" r=".8"/><circle cx="551.2" cy="188.7" r=".8"/><circle cx="554.7" cy="190.2" r=".8"/><circle cx="556.2" cy="193.6" r=".8"/></g><g fill="none" stroke="#ececec" stroke-width="1.35" stroke-linecap="round" stroke-linejoin="round" ><path d="M549.7 236.5 A3.4 4.4 0 1 1 552.7 236.5 c0 1.700 1 2.400 2.600 3.100 c2 .9 3.700 1.700 3.700 3.500 v.5 a.9 .9 0 0 1 -.9 .9 h-13.800 a.9 .9 0 0 1 -.9 -.9 v-.5 c0 -1.800 1.700 -2.600 3.700 -3.500 c1.600 -.7 2.600 -1.400 2.600 -3.100z"/></g><g fill="none" stroke="#ececec" stroke-width="1.35" stroke-linecap="round" stroke-linejoin="round" ><path d="M543.4 278.5 h15.600 l-1.900 8.500 a1.400 1.400 0 0 1 -1.400 1.100 h-9 a1.400 1.400 0 0 1 -1.400 -1.100z"/><path d="M546.3 278.2 l4.900 -4.300 l4.900 4.300"/><path d="M549 283.400 h4.400"/></g><g fill="none" stroke="#ececec" stroke-width="1.3" stroke-linecap="round" stroke-linejoin="round" ><rect x="544.4" y="354.4" width="13.6" height="13.400" rx="1.3"/><path d="M547.300 364.900 l7.800 -7.600"/><path d="M546.700 358.100 h3 M548.200 356.600 v3 M553.500 364.700 h2.800"/></g><g fill="none" stroke="#ececec" stroke-width="1.3" stroke-linecap="round" stroke-linejoin="round" ><path d="M546.5 391.9 h6.700 l4 4 v10.800 a1.200 1.200 0 0 1 -1.200 1.200 h-9.500 a1.200 1.200 0 0 1 -1.200 -1.200 v-13.600 a1.200 1.200 0 0 1 1.200 -1.200z"/><path d="M553.1999999999999 391.9 v4 h4"/><path d="M548 400.200 h6.500 M548 403.600 h6.500"/></g><g fill="none" stroke="#ececec" stroke-width="1.3" stroke-linecap="round" stroke-linejoin="round" ><path d="M554.200 452 a8.300 8.300 0 1 1 4.700 -5.200"/><path d="M556.300 448.600 v4.400 M554.400 451.300 l1.900 1.900 l1.900 -1.900"/></g><text x="550.4" y="448.3" font-family="Liberation Sans, sans-serif" font-size="11" font-weight="400" fill="#ececec" stroke="none" text-anchor="middle">$</text><g fill="none" stroke="#ececec" stroke-width="1.3" stroke-linecap="round" stroke-linejoin="round" ><path d="M546.5 481.6 h6.700 l4 4 v10.800 a1.200 1.200 0 0 1 -1.200 1.200 h-9.500 a1.200 1.200 0 0 1 -1.200 -1.200 v-13.600 a1.200 1.200 0 0 1 1.200 -1.200z"/><path d="M553.1999999999999 481.6 v4 h4"/><path d="M548.300 488.400 h5.600 v-1.500 M552.500 486.800 l1.500 1.600 l-1.500 1.600" stroke-width="1.1"/><path d="M554.200 492.600 h-5.600 v1.500 M550 491 l-1.500 1.600 l1.500 1.600" stroke-width="1.1"/></g><g fill="none" stroke="#ececec" stroke-width="1.3" stroke-linecap="round" stroke-linejoin="round" ><path d="M546.5 525.8 h9.500 a1.200 1.200 0 0 1 1.200 1.200 v10.800 l-4 4 h-6.700 a1.200 1.200 0 0 1 -1.200 -1.200 v-13.600 a1.200 1.200 0 0 1 1.200 -1.200z"/><path d="M557.2 537.8 h-4 v4"/></g><text x="551.1" y="537.4" font-family="Liberation Sans, sans-serif" font-size="11" font-weight="400" fill="#ececec" stroke="none" text-anchor="middle">$</text><g fill="none" stroke="#ececec" stroke-width="1.5" stroke-linecap="round" stroke-linejoin="round" ><circle cx="551" cy="585" r="8.100"/></g><text x="551" y="589" font-family="Liberation Sans, sans-serif" font-size="11" font-weight="400" fill="#ececec" stroke="none" text-anchor="middle">$</text><g fill="none" stroke="#33a5f2" stroke-width="1.3" stroke-linecap="round" stroke-linejoin="round" ><path d="M544.400 635.200 V647.200 H558 V635.200"/><path d="M544.400 634.200 h2.200 M558 634.200 h-2.200 M549.300 634.200 h3.800"/><path d="M547.400 632.800 v3.200 M555 632.800 v3.200"/></g><g fill="#33a5f2"><rect x="547.8000000000001" y="638.7" width="1.8" height="1.8"/><rect x="552.8000000000001" y="638.7" width="1.8" height="1.8"/><rect x="547.8000000000001" y="642.7" width="1.8" height="1.8"/><rect x="552.8000000000001" y="642.7" width="1.8" height="1.8"/></g><g fill="none" stroke="#33a5f2" stroke-width="1.5" stroke-linecap="round" stroke-linejoin="round" ><path d="M729.000 640.300 h13.600 M735.800 633.500 v13.600"/></g><g fill="none" stroke="#ececec" stroke-width="1.3" stroke-linecap="round" stroke-linejoin="round" ><path d="M545.800 688.500 l2.500 -3.300 M551.300 684.500 l1.600 2.300 M555 686.500 l2.300 -5"/><circle cx="544.800" cy="689.700" r="1.600"/><circle cx="549.600" cy="683.600" r="1.600"/><circle cx="554.000" cy="688.000" r="1.600"/><circle cx="558.000" cy="680.100" r="1.600"/></g><g fill="none" stroke="#fff" stroke-width="2.1" stroke-linecap="round" stroke-linejoin="round" ><path d="M647 1041.3 L639.9 1047.8 L647 1054.3"/></g></svg>
</div>
</body></html>
